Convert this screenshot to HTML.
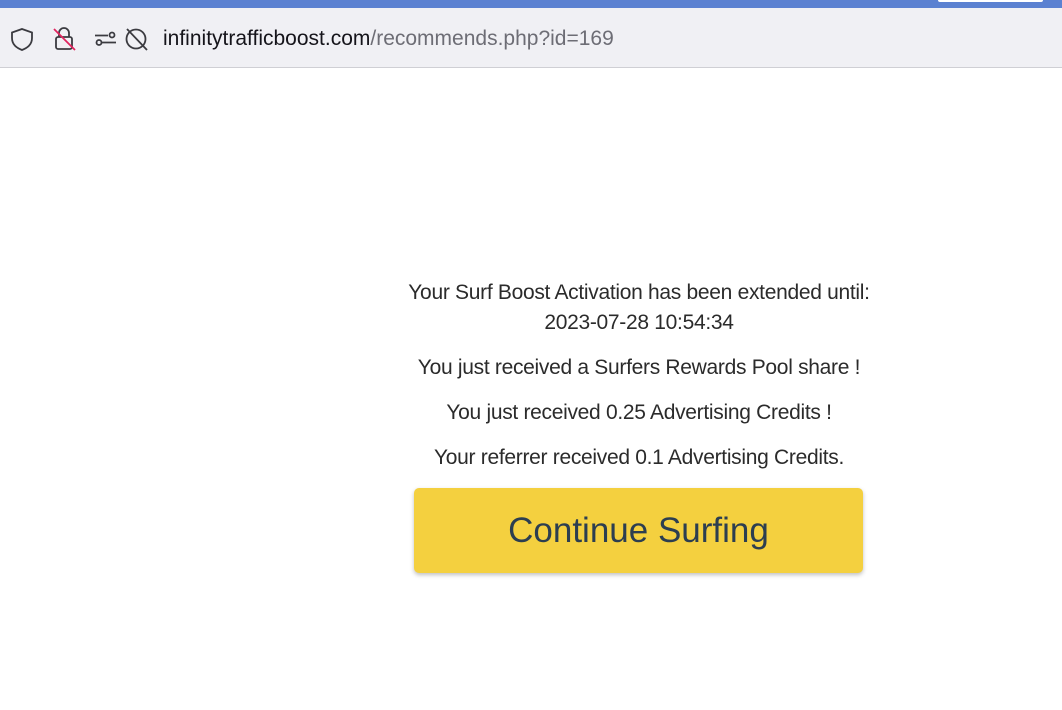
<!DOCTYPE html>
<html><head><style>
body{margin:0;width:1062px;height:710px;overflow:hidden;background:#fff;font-family:"Liberation Sans",sans-serif;position:relative}
.top{position:absolute;left:0;top:0;width:1062px;height:8px;background:#5b81d1}
.tab{position:absolute;left:938px;top:0;width:105px;height:2px;background:#fff;border-radius:0 0 4px 4px}
.bar{position:absolute;left:0;top:8px;width:1062px;height:59px;background:#f0f0f4;border-bottom:1px solid #cfcfd4}
.url{position:absolute;left:163px;top:19px;font-size:21px;color:#15141a;letter-spacing:0}
.url span{color:#6d6d75}
.t{position:absolute;left:250px;width:778px;text-align:center;font-size:21px;color:#2b2b2b;letter-spacing:-0.3px}
.btn{position:absolute;left:414px;top:488px;width:449px;height:85px;background:#f4d03f;border-radius:5px;box-shadow:0 2px 4px rgba(0,0,0,.25);text-align:center;line-height:85px;font-size:35px;color:#2c3e50}
</style></head><body>
<div class="top"></div><div class="tab"></div>
<div class="bar">
<svg width="160" height="59" style="position:absolute;left:0;top:0" fill="none" stroke="#3b3b40" stroke-width="1.8">
<path d="M22 21 L32 24.5 V30 C32 37 27 40 22 42 C17 40 12 37 12 30 V24.5 Z"/>
<path d="M59 29 V25 a5 5 0 0 1 10 0 V29"/><rect x="56" y="29" width="16" height="12" rx="2"/>
<path d="M54 21 L75 42" stroke="#e0245e"/>
<circle cx="99" cy="34.5" r="2.5"/><path d="M102 34.5 H116 M95 27.5 H108"/><circle cx="112" cy="27" r="2.5"/>
<circle cx="136" cy="31" r="9.5"/><path d="M127 21 L147 42"/>
</svg>
<div class="url">infinitytrafficboost.com<span>/recommends.php?id=169</span></div>
</div>
<div class="t" style="top:281px">Your Surf Boost Activation has been extended until:</div>
<div class="t" style="top:311px">2023-07-28 10:54:34</div>
<div class="t" style="top:356px">You just received a Surfers Rewards Pool share !</div>
<div class="t" style="top:401px">You just received 0.25 Advertising Credits !</div>
<div class="t" style="top:446px">Your referrer received 0.1 Advertising Credits.</div>
<div class="btn">Continue Surfing</div>
</body></html>
